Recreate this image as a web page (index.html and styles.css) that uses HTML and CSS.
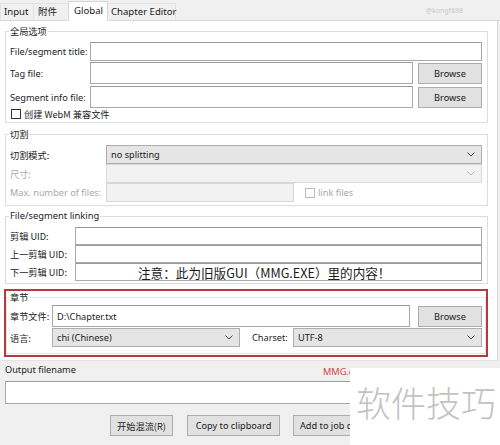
FILE: index.html
```html
<!DOCTYPE html>
<html>
<head>
<meta charset="utf-8">
<link rel="stylesheet" href="styles.css">
</head>
<body>
<div class="app">
  <div class="tabbar">
    <div class="tab t-input">Input</div>
    <div class="tab t-att">附件</div>
    <div class="tab active t-global">Global</div>
    <div class="tab t-chap">Chapter Editor</div>
    <div class="wm">@kongf888</div>
  </div>

  <div class="panel">
    <fieldset class="group g1">
      <legend>全局选项</legend>
      <div class="row h19 mb1"><span class="lbl w80">File/segment title:</span><div class="input grow"></div></div>
      <div class="row h22 mb2"><span class="lbl w80">Tag file:</span><div class="input grow"></div><div class="btn browse">Browse</div></div>
      <div class="row h22"><span class="lbl w80">Segment info file:</span><div class="input grow"></div><div class="btn browse">Browse</div></div>
      <div class="row h12 chk-row"><span class="chk"></span><span class="cjk">创建 WebM 兼容文件</span></div>
    </fieldset>

    <fieldset class="group g2">
      <legend>切割</legend>
      <div class="row h19"><span class="lbl w96 cjk">切割模式:</span><div class="select grow"><span>no splitting</span><svg class="chev" width="8" height="5" viewBox="0 0 8 5"><path d="M0.5 0.5 L4 4 L7.5 0.5" fill="none" stroke="#4a4a4a" stroke-width="1"/></svg></div></div>
      <div class="row h19"><span class="lbl w96 cjk dis">尺寸:</span><div class="select disabled grow"><span></span><svg class="chev" width="8" height="5" viewBox="0 0 8 5"><path d="M0.5 0.5 L4 4 L7.5 0.5" fill="none" stroke="#b8b8b8" stroke-width="1"/></svg></div></div>
      <div class="row h19"><span class="lbl w96 dis">Max. number of files:</span><div class="input disabled maxf"></div><span class="chk dischk"></span><span class="dis">link files</span></div>
    </fieldset>

    <fieldset class="group g3">
      <legend>File/segment linking</legend>
      <div class="row h18"><span class="lbl w65 cjk">剪辑 UID:</span><div class="input grow"></div></div>
      <div class="row h18"><span class="lbl w65 cjk">上一剪辑 UID:</span><div class="input grow"></div></div>
      <div class="row h18"><span class="lbl w65 cjk">下一剪辑 UID:</span><div class="input grow note">注意：此为旧版GUI（MMG.EXE）里的内容！</div></div>
    </fieldset>

    <div class="redbox">
      <fieldset class="group g4">
        <legend>章节</legend>
        <div class="row h22 mb1"><span class="lbl w42 cjk">章节文件:</span><div class="input chapfile"><span>D:\Chapter.txt</span></div><div class="btn browse">Browse</div></div>
        <div class="row h19"><span class="lbl w42 cjk">语言:</span><div class="select lang"><span>chi (Chinese)</span><svg class="chev" width="8" height="5" viewBox="0 0 8 5"><path d="M0.5 0.5 L4 4 L7.5 0.5" fill="none" stroke="#4a4a4a" stroke-width="1"/></svg></div><span class="lbl charset">Charset:</span><div class="select grow"><span>UTF-8</span><svg class="chev" width="8" height="5" viewBox="0 0 8 5"><path d="M0.5 0.5 L4 4 L7.5 0.5" fill="none" stroke="#4a4a4a" stroke-width="1"/></svg></div></div>
      </fieldset>
    </div>
  </div>

  <div class="bottom">
    <div class="out-label">Output filename</div>
    <div class="input outfile"></div>
    <div class="buttons">
      <div class="btn b-start cjk">开始混流(R)</div>
      <div class="btn b-copy">Copy to clipboard</div>
      <div class="btn b-add">Add to job queue</div>
    </div>
  </div>

  <div class="mmg">MMG.exe</div>
  <div class="overlay">软件技巧</div>
</div>
</body>
</html>
```

FILE: styles.css
```css
* { box-sizing: border-box; }
html, body { margin: 0; padding: 0; }
body {
  width: 500px;
  height: 445px;
  overflow: hidden;
  background: #f0f0f0;
  font-family: "Noto Sans", "Noto Sans CJK SC", sans-serif;
  font-size: 9.2px;
  color: #1b1b1b;
}
.app { position: relative; width: 500px; height: 445px; }
.cjk { font-family: "Noto Sans CJK SC", "Noto Sans", sans-serif; font-size: 9.2px; }

/* tabs */
.tabbar {
  height: 21px;
  display: flex;
  align-items: flex-end;
  border-bottom: 1px solid #dadada;
}
.tab {
  height: 17px;
  line-height: 15px;
  border: 1px solid #e2e2e2;
  border-bottom: none;
  margin-right: -1px;
  background: #f0f0f0;
  color: #1b1b1b;
  white-space: nowrap;
  font-size: 9.6px;
}
.t-input { width: 34px; padding-left: 3px; }
.t-att { width: 36px; padding-left: 4px; font-family: "Noto Sans CJK SC", sans-serif; font-size: 9.5px; }
.t-global { width: 40px; padding-left: 5px; }
.t-chap { width: 69px; padding-left: 3px; }
.tab.active {
  height: 20px;
  line-height: 18px;
  background: #fff;
  border-color: #d6d6d6;
  margin-bottom: -1px;
  position: relative;
  z-index: 1;
}
.wm {
  margin-left: auto;
  margin-right: 37px;
  align-self: center;
  font-size: 7px;
  color: #c9c9c9;
}

/* panel */
.panel {
  width: 498px;
  height: 340px;
  background: #fff;
  border-right: 1px solid #d8d8d8;
  border-bottom: 1px solid #e4e4e4;
  padding: 3px 0 0 5px;
}
.group {
  margin: 0;
  width: 483px;
  border: 1px solid #dcdcdc;
  padding: 4px 5px 2px 4px;
  min-width: 0;
}
.group legend {
  padding: 0 1px;
  margin-left: -1px;
  line-height: 14px;
  font-size: 9.4px;
}
.g1 legend, .g2 legend, .g4 legend { font-family: "Noto Sans CJK SC", sans-serif; font-size: 9.2px; }
.g2 { margin-top: 4px; padding-bottom: 3px; }
.g3 { margin-top: 3px; padding-bottom: 2px; }

.row { display: flex; align-items: center; }
.h12 { height: 12px; }
.h18 { height: 18px; }
.h19 { height: 19px; }
.h22 { height: 22px; }
.mb1 { margin-bottom: 1px; }
.mb2 { margin-bottom: 2px; }
.lbl { flex: none; white-space: nowrap; }
.w42 { width: 42px; }
.w65 { width: 65px; }
.w80 { width: 80px; }
.w96 { width: 96px; }
.grow { flex: 1; }
.dis { color: #a8a8a8; }

.input {
  height: 100%;
  background: #fff;
  border: 1px solid #a9a9a9;
  border-top-color: #9a9a9a;
  display: flex;
  align-items: center;
  padding-left: 4px;
}
.input.disabled { background: #f2f2f2; border-color: #d6d6d6; }
.maxf { flex: none; width: 188px; margin-right: 11px; }
.note {
  padding-left: 62px;
  font-family: "Noto Sans CJK SC", sans-serif;
  font-size: 12.6px;
  color: #1a1a1a;
  white-space: nowrap;
  overflow: hidden;
}

.select {
  height: 100%;
  background: #e5e5e5;
  border: 1px solid #adadad;
  display: flex;
  align-items: center;
  justify-content: space-between;
  padding: 0 6px 0 4px;
}
.select.disabled { background: #f2f2f2; border-color: #d9d9d9; }
.chev { flex: none; }

.btn {
  flex: none;
  height: 100%;
  background: #e1e1e1;
  border: 1px solid #adadad;
  display: flex;
  align-items: center;
  justify-content: center;
  white-space: nowrap;
}
.browse { width: 64px; margin-left: 5px; height: 21px; }

.chk {
  flex: none;
  width: 10px;
  height: 10px;
  border: 1px solid #333;
  background: #fff;
  margin-right: 3px;
}
.chk-row { margin-left: 1px; }
.dischk { border-color: #bcbcbc; }

/* chapters */
.redbox {
  margin-top: 5px;
  margin-left: -1px;
  width: 484px;
  border: 2px solid #b23b40;
  padding-bottom: 1px;
}
.g4 {
  width: 100%;
  border-color: #e6e6e6;
  padding: 2px 3px 6px 3px;
}
.g4 legend { line-height: 12px; }
.chapfile { flex: none; width: 358px; }
.g4 .browse { margin-left: 8px; }
.lang { flex: none; width: 188px; }
.charset { width: 41px; margin-left: 12px; }

/* bottom */
.bottom { padding-left: 5px; }
.out-label { margin-top: 3px; line-height: 12px; }
.outfile { margin-top: 5px; width: 483px; height: 23px; }
.buttons {
  display: flex;
  width: 345px;
  overflow: hidden;
  height: 21px;
  margin-top: 11px;
  padding-left: 105px;
}
.b-start { width: 63px; }
.b-copy { width: 93px; margin-left: 14px; }
.b-add { width: 92px; margin-left: 13px; justify-content: flex-start; padding-left: 6px; }

.mmg {
  position: absolute;
  left: 323px;
  top: 366px;
  width: 27px;
  overflow: hidden;
  white-space: nowrap;
  font-size: 9.2px;
  line-height: 12px;
  color: #d04545;
}
.overlay {
  position: absolute;
  left: 350px;
  top: 368px;
  width: 150px;
  height: 77px;
  background: #fff;
  font-family: "Noto Sans CJK SC", sans-serif;
  font-weight: 300;
  font-size: 35px;
  color: #c2c2c2;
  padding: 13px 0 0 6px;
  line-height: 42px;
  white-space: nowrap;
}
```
